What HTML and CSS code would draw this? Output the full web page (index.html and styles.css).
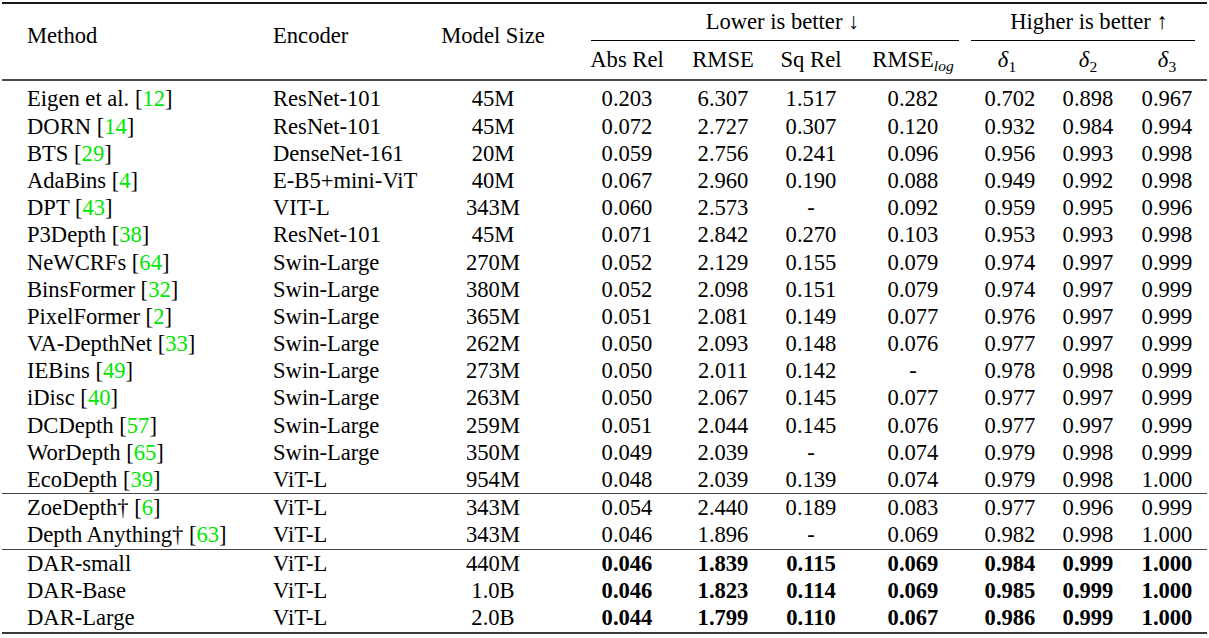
FILE: index.html
```html
<!DOCTYPE html>
<html>
<head>
<meta charset="utf-8">
<link rel="stylesheet" href="styles.css">
</head>
<body>
<div class="table">
  <div class="head">
    <div class="h-method">Method</div>
    <div class="h-enc">Encoder</div>
    <div class="h-size">Model Size</div>
    <div class="grp grp-lower"><span class="grp-text">Lower is better ↓</span></div>
    <div class="grp grp-higher"><span class="grp-text">Higher is better ↑</span></div>
    <div class="sub c4">Abs Rel</div>
    <div class="sub c5">RMSE</div>
    <div class="sub c6">Sq Rel</div>
    <div class="sub c7">RMSE<sub class="lg">log</sub></div>
    <div class="sub c8"><i class="dl">δ</i><sub class="ds">1</sub></div>
    <div class="sub c9"><i class="dl">δ</i><sub class="ds">2</sub></div>
    <div class="sub c10"><i class="dl">δ</i><sub class="ds">3</sub></div>
  </div>

  <div class="block block-first">
    <div class="row"><div class="c1">Eigen et al. [<span class="cite">12</span>]</div><div class="c2">ResNet-101</div><div class="c3">45M</div><div class="c4">0.203</div><div class="c5">6.307</div><div class="c6">1.517</div><div class="c7">0.282</div><div class="c8">0.702</div><div class="c9">0.898</div><div class="c10">0.967</div></div>
    <div class="row"><div class="c1">DORN [<span class="cite">14</span>]</div><div class="c2">ResNet-101</div><div class="c3">45M</div><div class="c4">0.072</div><div class="c5">2.727</div><div class="c6">0.307</div><div class="c7">0.120</div><div class="c8">0.932</div><div class="c9">0.984</div><div class="c10">0.994</div></div>
    <div class="row"><div class="c1">BTS [<span class="cite">29</span>]</div><div class="c2">DenseNet-161</div><div class="c3">20M</div><div class="c4">0.059</div><div class="c5">2.756</div><div class="c6">0.241</div><div class="c7">0.096</div><div class="c8">0.956</div><div class="c9">0.993</div><div class="c10">0.998</div></div>
    <div class="row"><div class="c1">AdaBins [<span class="cite">4</span>]</div><div class="c2">E-B5+mini-ViT</div><div class="c3">40M</div><div class="c4">0.067</div><div class="c5">2.960</div><div class="c6">0.190</div><div class="c7">0.088</div><div class="c8">0.949</div><div class="c9">0.992</div><div class="c10">0.998</div></div>
    <div class="row"><div class="c1">DPT [<span class="cite">43</span>]</div><div class="c2">VIT-L</div><div class="c3">343M</div><div class="c4">0.060</div><div class="c5">2.573</div><div class="c6">-</div><div class="c7">0.092</div><div class="c8">0.959</div><div class="c9">0.995</div><div class="c10">0.996</div></div>
    <div class="row"><div class="c1">P3Depth [<span class="cite">38</span>]</div><div class="c2">ResNet-101</div><div class="c3">45M</div><div class="c4">0.071</div><div class="c5">2.842</div><div class="c6">0.270</div><div class="c7">0.103</div><div class="c8">0.953</div><div class="c9">0.993</div><div class="c10">0.998</div></div>
    <div class="row"><div class="c1">NeWCRFs [<span class="cite">64</span>]</div><div class="c2">Swin-Large</div><div class="c3">270M</div><div class="c4">0.052</div><div class="c5">2.129</div><div class="c6">0.155</div><div class="c7">0.079</div><div class="c8">0.974</div><div class="c9">0.997</div><div class="c10">0.999</div></div>
    <div class="row"><div class="c1">BinsFormer [<span class="cite">32</span>]</div><div class="c2">Swin-Large</div><div class="c3">380M</div><div class="c4">0.052</div><div class="c5">2.098</div><div class="c6">0.151</div><div class="c7">0.079</div><div class="c8">0.974</div><div class="c9">0.997</div><div class="c10">0.999</div></div>
    <div class="row"><div class="c1">PixelFormer [<span class="cite">2</span>]</div><div class="c2">Swin-Large</div><div class="c3">365M</div><div class="c4">0.051</div><div class="c5">2.081</div><div class="c6">0.149</div><div class="c7">0.077</div><div class="c8">0.976</div><div class="c9">0.997</div><div class="c10">0.999</div></div>
    <div class="row"><div class="c1">VA-DepthNet [<span class="cite">33</span>]</div><div class="c2">Swin-Large</div><div class="c3">262M</div><div class="c4">0.050</div><div class="c5">2.093</div><div class="c6">0.148</div><div class="c7">0.076</div><div class="c8">0.977</div><div class="c9">0.997</div><div class="c10">0.999</div></div>
    <div class="row"><div class="c1">IEBins [<span class="cite">49</span>]</div><div class="c2">Swin-Large</div><div class="c3">273M</div><div class="c4">0.050</div><div class="c5">2.011</div><div class="c6">0.142</div><div class="c7">-</div><div class="c8">0.978</div><div class="c9">0.998</div><div class="c10">0.999</div></div>
    <div class="row"><div class="c1">iDisc [<span class="cite">40</span>]</div><div class="c2">Swin-Large</div><div class="c3">263M</div><div class="c4">0.050</div><div class="c5">2.067</div><div class="c6">0.145</div><div class="c7">0.077</div><div class="c8">0.977</div><div class="c9">0.997</div><div class="c10">0.999</div></div>
    <div class="row"><div class="c1">DCDepth [<span class="cite">57</span>]</div><div class="c2">Swin-Large</div><div class="c3">259M</div><div class="c4">0.051</div><div class="c5">2.044</div><div class="c6">0.145</div><div class="c7">0.076</div><div class="c8">0.977</div><div class="c9">0.997</div><div class="c10">0.999</div></div>
    <div class="row"><div class="c1">WorDepth [<span class="cite">65</span>]</div><div class="c2">Swin-Large</div><div class="c3">350M</div><div class="c4">0.049</div><div class="c5">2.039</div><div class="c6">-</div><div class="c7">0.074</div><div class="c8">0.979</div><div class="c9">0.998</div><div class="c10">0.999</div></div>
    <div class="row"><div class="c1">EcoDepth [<span class="cite">39</span>]</div><div class="c2">ViT-L</div><div class="c3">954M</div><div class="c4">0.048</div><div class="c5">2.039</div><div class="c6">0.139</div><div class="c7">0.074</div><div class="c8">0.979</div><div class="c9">0.998</div><div class="c10">1.000</div></div>
  </div>

  <div class="block">
    <div class="row"><div class="c1">ZoeDepth† [<span class="cite">6</span>]</div><div class="c2">ViT-L</div><div class="c3">343M</div><div class="c4">0.054</div><div class="c5">2.440</div><div class="c6">0.189</div><div class="c7">0.083</div><div class="c8">0.977</div><div class="c9">0.996</div><div class="c10">0.999</div></div>
    <div class="row"><div class="c1">Depth Anything† [<span class="cite">63</span>]</div><div class="c2">ViT-L</div><div class="c3">343M</div><div class="c4">0.046</div><div class="c5">1.896</div><div class="c6">-</div><div class="c7">0.069</div><div class="c8">0.982</div><div class="c9">0.998</div><div class="c10">1.000</div></div>
  </div>

  <div class="block block-last">
    <div class="row best"><div class="c1">DAR-small</div><div class="c2">ViT-L</div><div class="c3">440M</div><div class="c4">0.046</div><div class="c5">1.839</div><div class="c6">0.115</div><div class="c7">0.069</div><div class="c8">0.984</div><div class="c9">0.999</div><div class="c10">1.000</div></div>
    <div class="row best"><div class="c1">DAR-Base</div><div class="c2">ViT-L</div><div class="c3">1.0B</div><div class="c4">0.046</div><div class="c5">1.823</div><div class="c6">0.114</div><div class="c7">0.069</div><div class="c8">0.985</div><div class="c9">0.999</div><div class="c10">1.000</div></div>
    <div class="row best"><div class="c1">DAR-Large</div><div class="c2">ViT-L</div><div class="c3">2.0B</div><div class="c4">0.044</div><div class="c5">1.799</div><div class="c6">0.110</div><div class="c7">0.067</div><div class="c8">0.986</div><div class="c9">0.999</div><div class="c10">1.000</div></div>
  </div>
</div>
</body>
</html>
```

FILE: styles.css
```css
html, body {
  margin: 0;
  padding: 0;
  background: #ffffff;
}

body {
  font-family: "Liberation Serif", "Times New Roman", serif;
  font-size: 22.6px;
  color: #000000;
}

.table {
  width: 1205px;
  margin: 2px 0 0 2px;
  border-top: 2px solid #1a1a1a;
  border-bottom: 2px solid #3a3a3a;
  --cols: 258px 160px 140px 115px 92px 95px 99px 88px 79px 79px;
}

.head {
  display: grid;
  grid-template-columns: var(--cols);
  grid-template-rows: 37px 38px;
  border-bottom: 2px solid #4a4a4a;
  white-space: nowrap;
}

.h-method,
.h-enc,
.h-size {
  grid-row: 1 / span 2;
  line-height: 26px;
  padding-top: 19px;
}

.h-method { grid-column: 1; padding-left: 25px; }
.h-enc { grid-column: 2; padding-left: 13px; }
.h-size { grid-column: 3; text-align: center; padding-left: 6px; }

.grp {
  grid-row: 1;
  border-bottom: 1px solid #000000;
  line-height: 26px;
  padding-top: 5px;
  text-align: center;
  box-sizing: border-box;
}

.grp-lower {
  grid-column: 4 / span 4;
  margin: 0 2px 0 31px;
  padding-left: 15px;
}

.grp-higher {
  grid-column: 8 / span 3;
  margin: 0 12px 0 10px;
  padding-left: 12px;
}

.sub {
  grid-row: 2;
  line-height: 26px;
  padding-top: 6px;
  text-align: center;
}

.lg {
  font-style: italic;
  font-size: 15.5px;
  vertical-align: -4px;
  line-height: 0;
}

.dl {
  font-style: italic;
}

.ds {
  font-size: 15.5px;
  vertical-align: -5px;
  line-height: 0;
}

.block {
  border-bottom: 1px solid #444444;
}

.block-first {
  padding-top: 4.4px;
}

.block-last {
  border-bottom: none;
  padding-bottom: 0.6px;
}

.row {
  display: grid;
  grid-template-columns: var(--cols);
  height: 27.2px;
  line-height: 27.2px;
  white-space: nowrap;
}

.row.best .c3 ~ div {
  font-weight: bold;
}

.c1 { padding-left: 25px; }
.c2 { padding-left: 13px; }
.c3, .c4, .c5, .c6, .c7, .c8, .c9, .c10 { text-align: center; }

.c3 { padding-left: 6px; }
.c4 { padding-left: 19px; }
.c5 { padding-left: 4px; }
.c6 { padding-right: 7px; }
.c7 { padding-left: 3px; }
.c8 { padding-left: 10px; }
.c9 { padding-right: 1px; }
.c10 { padding-right: 1px; }

.sub.c8 { padding-left: 4px; }

.cite {
  color: #00e600;
}
```
